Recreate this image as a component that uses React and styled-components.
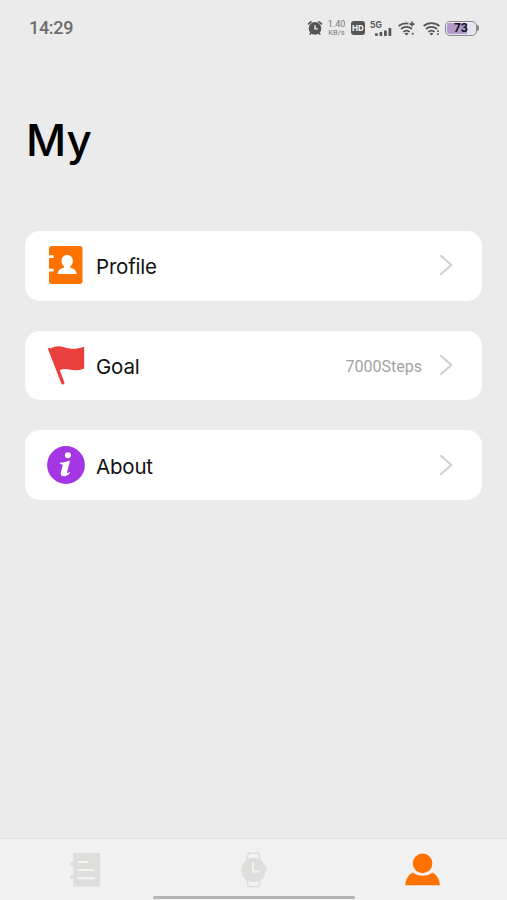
import React from 'react'
import styled, { createGlobalStyle } from 'styled-components';

function App() {
  return (
    <Screen>
        <GlobalStyle />
        <StatusBar>
            <Clock>14:29</Clock>
            <StatusIcons>
                <AlarmIcon />
                <Speed>
                    <Rate>1.40</Rate>
                    <Unit>KB/s</Unit>
                </Speed>
                <HdBadge>HD</HdBadge>
                <Signal>
                    <Network>5G</Network>
                    <SignalBars />
                </Signal>
                <Wifi>
                    <WifiIcon plus />
                    <WifiIcon />
                </Wifi>
                <Battery>
                    <BatteryBody>
                        <BatteryLevel>73</BatteryLevel>
                    </BatteryBody>
                    <BatteryTip />
                </Battery>
            </StatusIcons>
        </StatusBar>
        <Title>My</Title>
        <Menu>
            <MenuItem icon={<ProfileIcon />} label="Profile" />
            <MenuItem icon={<FlagIcon />} label="Goal" value="7000Steps" />
            <MenuItem icon={<InfoIcon />} label="About" />
        </Menu>
        <TabBar>
            <Tabs>
                <Tab><NotebookIcon /></Tab>
                <Tab><WatchIcon /></Tab>
                <Tab><PersonIcon /></Tab>
            </Tabs>
            <HomeIndicator />
        </TabBar>
    </Screen>
  )
}

export default App;

function MenuItem(props) {
    const { icon, label, value } = props;
  return (
    <Card>
        <IconSlot>{icon}</IconSlot>
        <Label>{label}</Label>
        { value && <Value>{value}</Value> }
        <Chevron />
    </Card>
  )
}

const AlarmIcon = () => (
    <svg width="16" height="16" viewBox="0 0 16 16">
        <path d="M1.6 3.9 4 1.9M12 1.9l2.4 2" stroke="#555" strokeWidth="1.8" strokeLinecap="round" />
        <circle cx="8" cy="8.4" r="6.3" fill="#555" />
        <path d="m4 13-.8 1M12 13l.8 1" stroke="#555" strokeWidth="1.7" strokeLinecap="round" />
        <path d="M8 5.2v3.7h2.8" fill="none" stroke="#eee" strokeWidth="1.4" />
    </svg>
)

const SignalBars = () => (
    <svg width="17" height="8" viewBox="0 0 17 8" fill="#555">
        <rect x="0" y="5.2" width="2.8" height="2.8" rx=".7" />
        <rect x="4.5" y="4" width="2.8" height="4" rx=".7" />
        <rect x="9" y="2.4" width="2.8" height="5.6" rx=".7" />
        <rect x="13.5" y="0" width="2.8" height="8" rx=".7" />
    </svg>
)

const WifiIcon = ({ plus }) => (
    <svg width="18" height="15" viewBox="0 0 18 15" fill="none" stroke="#555" strokeWidth="1.7">
        <path d={plus ? 'M.6 5C3.3 2.8 6.7 1.9 10.5 2.6' : 'M.6 5C5 1.1 12 1.1 16.4 5'} />
        <path d="M3 8c3.2-2.8 7.8-2.8 11 0" />
        <path d="M5.3 10.9c1.9-1.6 4.5-1.6 6.4 0" />
        <path d="m6.5 12.4 2 2 2-2c-1.2-.8-2.8-.8-4 0Z" fill="#555" stroke="none" />
        { plus && <path d="M14 .6v5M11.5 3.1h5" strokeWidth="1.6" /> }
        { plus && <circle cx="14.7" cy="12.8" r="1" fill="#555" stroke="none" /> }
        { !plus && <path d="M15 9.2v1.9M15 12.2v1.9" strokeWidth="1.6" /> }
    </svg>
)

const ProfileIcon = () => (
    <svg width="38" height="40" viewBox="0 0 38 40">
        <rect x="2" y="1" width="33.5" height="38" rx="3" fill="#ff7200" />
        <path d="M0 11.6h6.6M0 25.2h6.6" stroke="#fff" strokeWidth="2.7" />
        <path d="M20.2 10c-3.4 0-5.7 2.5-5.7 5.8 0 2.3 1 4.3 2.6 5.4v1.3c-3.9 1.2-6.1 2.8-6.6 6.5h19.2c-.4-3.7-2.7-5.3-6.4-6.5v-1.3c1.5-1.1 2.6-3.1 2.6-5.4 0-3.3-2.3-5.8-5.7-5.8Z" fill="#fff" />
    </svg>
)

const FlagIcon = () => (
    <svg width="38" height="40" viewBox="0 0 38 40">
        <path d="M1.2 4.5c-.5-1.6 1.1-2.5 2.3-1.1C8.2.8 12.2.5 17.2 2.2c6.2 2 12.2 2.1 19.2-.3.5-.2.8 0 .8.5v21c-5.3 2.4-10.6 2.1-15.1 1-3.5-.9-6.5-.6-9.3.7l4.6 12.4c.5 1.8-2.2 2.9-3.1.9Z" fill="#e9403e" />
    </svg>
)

const InfoIcon = () => (
    <svg width="38" height="40" viewBox="0 0 38 40">
        <circle cx="19" cy="20" r="18.9" fill="#a436e3" />
        <circle cx="20.9" cy="10.3" r="3" fill="#fff" />
        <path d="M12.9 17.8c3.6-.3 6.8-1 10.2-2.3l-3 11.6c-.3 1.1.2 1.3 1.2.7l1.3-.8.4.9c-2.1 2.3-4.1 3.4-6.2 3.4-2.6 0-3.5-1.6-2.9-4l1.7-6.6c.3-1.2-.1-1.6-2.7-1.8Z" fill="#fff" />
    </svg>
)

const Chevron = () => (
    <svg width="14" height="22" viewBox="0 0 14 22" fill="none">
        <path d="M1.3 1.2 12.3 11 1.3 20.8" stroke="#cfcfcf" strokeWidth="2" />
    </svg>
)

const NotebookIcon = () => (
    <svg width="32" height="34" viewBox="0 0 32 34">
        <path d="M4.2 0h27v33.5h-27V26H3c-2.4 0-2.4-4 0-4h1.2v-9H3c-2.4 0-2.4-4.2 0-4.2h1.2Z" fill="#dededc" />
        <path d="M8.7 9h9.7M8.7 17h16.7M8.7 25.2h17.5" stroke="#f4f4f3" strokeWidth="2" />
    </svg>
)

const WatchIcon = () => (
    <svg width="26" height="36" viewBox="0 0 26 36">
        <path d="M6 8 7.3 1.2h10.4L19 8M6 28l1.3 6.6h10.4L19 28" fill="#f3f3f2" stroke="#dededc" strokeWidth="1.5" />
        <circle cx="12.5" cy="18" r="12.2" fill="#dededc" />
        <rect x="24.3" y="15" width="1.5" height="5" fill="#dededc" />
        <path d="M12 10.5v9h6.5" fill="none" stroke="#f3f3f2" strokeWidth="2" />
    </svg>
)

const PersonIcon = () => (
    <svg width="36" height="34" viewBox="0 0 36 34" fill="#ff7200">
        <circle cx="17.6" cy="10.4" r="9.8" />
        <path d="M.4 32.2c.1-6.2 3-10.5 7.5-12.8 5.8 4.3 13.6 4.3 19.4 0 4.5 2.3 7.4 6.6 7.5 12.8Z" />
    </svg>
)

const GlobalStyle = createGlobalStyle`
    * {
        box-sizing: border-box;
    }
    body {
        margin: 0;
        background-color: #ebebeb;
    }
    svg {
        display: block;
        flex-shrink: 0;
    }
`
const Screen = styled.div`
    width: 100%;
    height: 100vh;
    display: flex;
    flex-direction: column;
    background-color: #ebebeb;
    color: #111;
    font-family: Inter, Roboto, sans-serif;
    overflow: hidden;
`
const StatusBar = styled.div`
    height: 56px;
    padding: 0 28px 0 29px;
    display: flex;
    align-items: center;
    justify-content: space-between;
    color: #555;
`
const Clock = styled.span`
    padding-bottom: 1px;
    font-family: Roboto, sans-serif;
    font-size: 18px;
    font-weight: 500;
    color: #6c6c6c;
    letter-spacing: -0.3px;
`
const StatusIcons = styled.div`
    display: flex;
    align-items: center;
`
const Speed = styled.div`
    width: 19px;
    height: 17px;
    margin: 0 5px 0 4px;
    display: flex;
    flex-direction: column;
    align-items: center;
    justify-content: space-between;
    color: #777;
`
const Rate = styled.span`
    font-family: Roboto, sans-serif;
    font-size: 9px;
    line-height: 9px;
`
const Unit = styled.span`
    font-family: Roboto, sans-serif;
    font-size: 7.5px;
    line-height: 8px;
`
const HdBadge = styled.div`
    width: 14px;
    height: 14px;
    border-radius: 3px;
    background-color: #555;
    color: #eee;
    display: flex;
    justify-content: center;
    align-items: center;
    font-size: 8px;
    font-weight: 800;
`
const Signal = styled.div`
    width: 22px;
    height: 15px;
    margin: 0 6px 0 5px;
    display: flex;
    flex-direction: column;
    justify-content: space-between;

    svg {
        margin: -2px 0 0 5px;
    }
`
const Network = styled.span`
    font-size: 8.5px;
    line-height: 8px;
    font-weight: 700;
`
const Wifi = styled.div`
    display: flex;
    gap: 7px;
`
const Battery = styled.div`
    display: flex;
    align-items: center;
    margin-left: 4px;
`
const BatteryBody = styled.div`
    width: 32px;
    height: 15px;
    padding: 1px;
    border: 1px solid #89858d;
    border-radius: 5px;
`
const BatteryLevel = styled.div`
    height: 100%;
    border-radius: 3px;
    background: linear-gradient(to right, #b49acb 0 73%, #e8e3ec 73%);
    color: #18131f;
    display: flex;
    justify-content: center;
    align-items: center;
    font-size: 11.5px;
    font-weight: 700;
`
const BatteryTip = styled.div`
    width: 2px;
    height: 6px;
    border-radius: 0 2px 2px 0;
    background-color: #89858d;
`
const Title = styled.h1`
    margin: 57px 0 0 26px;
    height: 54px;
    color: #000;
    font-size: 44px;
    font-weight: 500;
    line-height: 54px;
`
const Menu = styled.div`
    margin-top: 64px;
    padding: 0 25px;
    display: flex;
    flex-direction: column;
    gap: 30px;
`
const Card = styled.div`
    height: 69.7px;
    padding: 0 29px 1px 22px;
    border-radius: 15px;
    background-color: #fff;
    display: flex;
    align-items: center;
`
const IconSlot = styled.div`
    width: 38px;
    margin-right: 11px;
`
const Label = styled.span`
    flex: 1;
    padding-top: 3px;
    font-size: 20.5px;
    letter-spacing: -0.2px;
`
const Value = styled.span`
    margin-right: 17px;
    padding-top: 3px;
    color: #a3a3a3;
    font-family: Roboto, sans-serif;
    font-size: 16px;
`
const TabBar = styled.div`
    height: 62px;
    margin-top: auto;
    border-top: 1px solid #e3e3e3;
    background-color: #f1f1f1;
    display: flex;
    flex-direction: column;
    align-items: center;
`
const Tabs = styled.div`
    width: 100%;
    height: 57px;
    padding-top: 4px;
    display: grid;
    grid-template-columns: repeat(3, 1fr);
`
const Tab = styled.div`
    display: flex;
    justify-content: center;
    align-items: center;
`
const HomeIndicator = styled.div`
    width: 202px;
    height: 3px;
    border-radius: 2px;
    background-color: #b4b4b4;
`
